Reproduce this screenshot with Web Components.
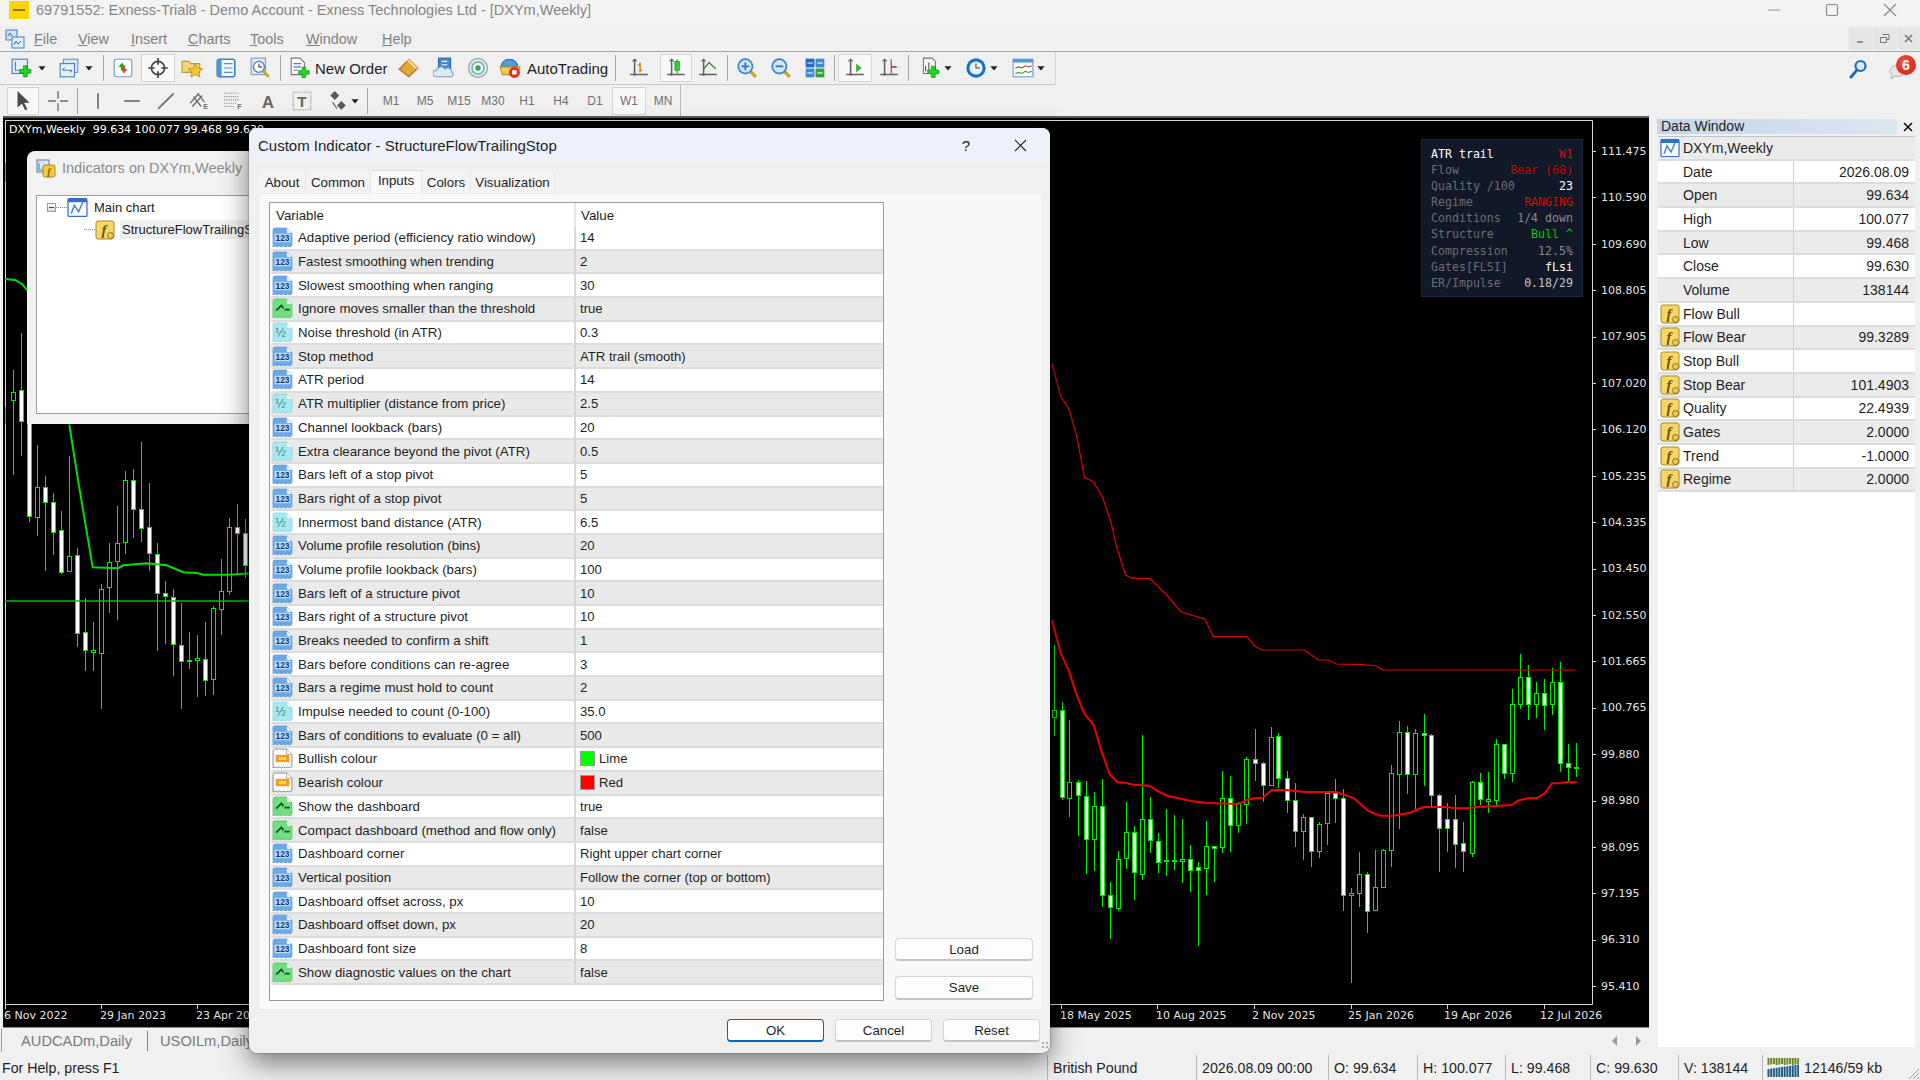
<!DOCTYPE html>
<html lang="en">
<head>
<meta charset="utf-8">
<title>Exness MT4 - Custom Indicator</title>
<style>
  html, body { margin: 0; padding: 0; }
  body {
    position: relative; width: 1920px; height: 1080px; overflow: hidden;
    display: flex; flex-direction: column; background: #f0f0f0;
    font-family: "Liberation Sans", Arial, sans-serif; font-size: 14px; color: #1f1f1f;
  }
  .main { display: flex; height: 937px; }
  .left { display: flex; flex-direction: column; width: 1651px; }
</style>
</head>
<body>
<mt-titlebar>69791552: Exness-Trial8 - Demo Account - Exness Technologies Ltd - [DXYm,Weekly]</mt-titlebar>
<mt-menubar></mt-menubar>

<mt-toolbar style="height:33px;width:1056px;border-right:1px solid #d4d4d4;border-bottom:1px solid #c8c8c8">
  <mt-tool icon="newchart" style="width:28px"></mt-tool>
  <mt-tool icon="caret" size="12" style="width:12px"></mt-tool>
  <mt-tool icon="profiles" style="width:30px;margin-left:6px"></mt-tool>
  <mt-tool icon="caret" size="12" style="width:10px"></mt-tool>
  <mt-sep style="margin-left:9px"></mt-sep>
  <mt-tool icon="market" style="margin-left:2px"></mt-tool>
  <mt-tool icon="target" pressed style="margin-left:1px"></mt-tool>
  <mt-tool icon="folderstar"></mt-tool>
  <mt-tool icon="terminal"></mt-tool>
  <mt-tool icon="tester"></mt-tool>
  <mt-sep style="margin-left:3px"></mt-sep>
  <mt-tool icon="neworder" style="width:106px;margin-left:4px;padding-left:4px;justify-content:flex-start;--gap:4px">New Order</mt-tool>
  <mt-tool icon="book" style="margin-left:1px"></mt-tool>
  <mt-tool icon="cloud" style="margin-left:1px"></mt-tool>
  <mt-tool icon="signal"></mt-tool>
  <mt-tool icon="auto" style="width:116px;margin-left:1px;padding-left:3px;justify-content:flex-start;--gap:6px">AutoTrading</mt-tool>
  <mt-sep style="margin-left:3px"></mt-sep>
  <mt-tool icon="barchart" style="width:32px;margin-left:7px"></mt-tool>
  <mt-tool icon="candle" pressed style="width:32px;margin-left:5px"></mt-tool>
  <mt-tool icon="linechart" style="width:32px"></mt-tool>
  <mt-sep style="margin-left:3px"></mt-sep>
  <mt-tool icon="zoomin" style="margin-left:2px"></mt-tool>
  <mt-tool icon="zoomout"></mt-tool>
  <mt-tool icon="tile"></mt-tool>
  <mt-sep style="margin-left:2px"></mt-sep>
  <mt-tool icon="autoscroll" pressed style="margin-left:3px"></mt-tool>
  <mt-tool icon="shift"></mt-tool>
  <mt-sep style="margin-left:2px"></mt-sep>
  <mt-tool icon="indplus" style="width:28px;margin-left:7px"></mt-tool>
  <mt-tool icon="caret" size="12" style="width:8px"></mt-tool>
  <mt-tool icon="clock" style="width:29px;margin-left:9px"></mt-tool>
  <mt-tool icon="caret" size="12" style="width:8px"></mt-tool>
  <mt-tool icon="template" style="width:29px;margin-left:10px"></mt-tool>
  <mt-tool icon="caret" size="12" style="width:8px"></mt-tool>
</mt-toolbar>

<mt-toolbar style="height:31px;width:681px;border-right:1px solid #b8b8b8">
  <mt-tool icon="arrow" pressed style="width:32px;margin-left:-1px"></mt-tool>
  <mt-tool icon="cross" style="margin-left:2px"></mt-tool>
  <mt-sep style="margin-left:2px"></mt-sep>
  <mt-tool icon="vline" style="margin-left:3px"></mt-tool>
  <mt-tool icon="hline"></mt-tool>
  <mt-tool icon="trend"></mt-tool>
  <mt-tool icon="channel"></mt-tool>
  <mt-tool icon="fib"></mt-tool>
  <mt-tool icon="lettera"></mt-tool>
  <mt-tool icon="lettert"></mt-tool>
  <mt-tool icon="arrows" style="width:28px;margin-left:4px"></mt-tool>
  <mt-tool icon="caret" size="12" style="width:8px"></mt-tool>
  <mt-sep style="margin-left:8px"></mt-sep>
  <mt-tool style="margin-left:6px">M1</mt-tool>
  <mt-tool>M5</mt-tool>
  <mt-tool>M15</mt-tool>
  <mt-tool>M30</mt-tool>
  <mt-tool>H1</mt-tool>
  <mt-tool>H4</mt-tool>
  <mt-tool>D1</mt-tool>
  <mt-tool pressed>W1</mt-tool>
  <mt-tool>MN</mt-tool>
</mt-toolbar>

<div class="main">
  <div class="left">
    <mt-chart>
      <mt-dashboard>
        <mt-dash-row label="ATR trail" value="W1" lc="#ffffff" vc="#c81414"></mt-dash-row>
        <mt-dash-row label="Flow" value="Bear (68)" vc="#c40000"></mt-dash-row>
        <mt-dash-row label="Quality /100" value="23" vc="#ffffff"></mt-dash-row>
        <mt-dash-row label="Regime" value="RANGING" vc="#e00000"></mt-dash-row>
        <mt-dash-row label="Conditions" value="1/4 down" vc="#8a8a8a"></mt-dash-row>
        <mt-dash-row label="Structure" value="Bull ^" vc="#00d000"></mt-dash-row>
        <mt-dash-row label="Compression" value="12.5%" vc="#8a8a8a"></mt-dash-row>
        <mt-dash-row label="Gates[FLSI]" value="fLsi" vc="#ffffff"></mt-dash-row>
        <mt-dash-row label="ER/Impulse" value="0.18/29" vc="#c4c4c4"></mt-dash-row>
      </mt-dashboard>
    </mt-chart>
    <mt-chart-tabs></mt-chart-tabs>
  </div>
  <mt-data-window>
    <mt-data-row icon="chartdoc" label="DXYm,Weekly" head></mt-data-row>
    <mt-data-row label="Date" value="2026.08.09"></mt-data-row>
    <mt-data-row label="Open" value="99.634"></mt-data-row>
    <mt-data-row label="High" value="100.077"></mt-data-row>
    <mt-data-row label="Low" value="99.468"></mt-data-row>
    <mt-data-row label="Close" value="99.630"></mt-data-row>
    <mt-data-row label="Volume" value="138144"></mt-data-row>
    <mt-data-row icon="func" label="Flow Bull" value=""></mt-data-row>
    <mt-data-row icon="func" label="Flow Bear" value="99.3289"></mt-data-row>
    <mt-data-row icon="func" label="Stop Bull" value=""></mt-data-row>
    <mt-data-row icon="func" label="Stop Bear" value="101.4903"></mt-data-row>
    <mt-data-row icon="func" label="Quality" value="22.4939"></mt-data-row>
    <mt-data-row icon="func" label="Gates" value="2.0000"></mt-data-row>
    <mt-data-row icon="func" label="Trend" value="-1.0000"></mt-data-row>
    <mt-data-row icon="func" label="Regime" value="2.0000"></mt-data-row>
  </mt-data-window>
</div>

<mt-statusbar></mt-statusbar>

<mt-indicators-window></mt-indicators-window>

<mt-dialog heading="Custom Indicator - StructureFlowTrailingStop">
  <mt-param type="int" value="14">Adaptive period (efficiency ratio window)</mt-param>
  <mt-param type="int" value="2">Fastest smoothing when trending</mt-param>
  <mt-param type="int" value="30">Slowest smoothing when ranging</mt-param>
  <mt-param type="bool" value="true">Ignore moves smaller than the threshold</mt-param>
  <mt-param type="dbl" value="0.3">Noise threshold (in ATR)</mt-param>
  <mt-param type="int" value="ATR trail (smooth)">Stop method</mt-param>
  <mt-param type="int" value="14">ATR period</mt-param>
  <mt-param type="dbl" value="2.5">ATR multiplier (distance from price)</mt-param>
  <mt-param type="int" value="20">Channel lookback (bars)</mt-param>
  <mt-param type="dbl" value="0.5">Extra clearance beyond the pivot (ATR)</mt-param>
  <mt-param type="int" value="5">Bars left of a stop pivot</mt-param>
  <mt-param type="int" value="5">Bars right of a stop pivot</mt-param>
  <mt-param type="dbl" value="6.5">Innermost band distance (ATR)</mt-param>
  <mt-param type="int" value="20">Volume profile resolution (bins)</mt-param>
  <mt-param type="int" value="100">Volume profile lookback (bars)</mt-param>
  <mt-param type="int" value="10">Bars left of a structure pivot</mt-param>
  <mt-param type="int" value="10">Bars right of a structure pivot</mt-param>
  <mt-param type="int" value="1">Breaks needed to confirm a shift</mt-param>
  <mt-param type="int" value="3">Bars before conditions can re-agree</mt-param>
  <mt-param type="int" value="2">Bars a regime must hold to count</mt-param>
  <mt-param type="dbl" value="35.0">Impulse needed to count (0-100)</mt-param>
  <mt-param type="int" value="500">Bars of conditions to evaluate (0 = all)</mt-param>
  <mt-param type="color" value="Lime" swatch="#00ff00">Bullish colour</mt-param>
  <mt-param type="color" value="Red" swatch="#ff0000">Bearish colour</mt-param>
  <mt-param type="bool" value="true">Show the dashboard</mt-param>
  <mt-param type="bool" value="false">Compact dashboard (method and flow only)</mt-param>
  <mt-param type="int" value="Right upper chart corner">Dashboard corner</mt-param>
  <mt-param type="int" value="Follow the corner (top or bottom)">Vertical position</mt-param>
  <mt-param type="int" value="10">Dashboard offset across, px</mt-param>
  <mt-param type="int" value="20">Dashboard offset down, px</mt-param>
  <mt-param type="int" value="8">Dashboard font size</mt-param>
  <mt-param type="bool" value="false">Show diagnostic values on the chart</mt-param>
</mt-dialog>

<script>
const plus = (x, y, s = 3) =>
  `<path d="M${x - s / 2} ${y - s * 1.5}h${s}v${s}h${s}v${s}h-${s}v${s}h-${s}v-${s}h-${s}v-${s}h${s}z" fill="#25d425" stroke="#0b8a0b" stroke-width=".6"/>`;
const axes = '<path d="M6 2v15M2 16h16" stroke="#5f5f5f" stroke-width="1.4" fill="none"/><path d="M4 4l2-2 2 2" stroke="#5f5f5f" fill="none"/>';
const paper = (fill, edge) =>
  `<path d="M1 2.5A1.5 1.5 0 0 1 2.500 1H14l5 5v11.500l-2 1.500-2-1-2 1-2-1-2 1-2-1-2 1-2-1-2 1z" fill="${fill}" stroke="${edge}" stroke-width=".8"/><path d="M14 1v5h5" fill="#fff" stroke="${edge}" stroke-width=".6"/>`;
const tile = (x, y, bg, fg) => `<rect x="${x}" y="${y}" width="8" height="8" fill="${bg}"/><path d="M${x + 1.5} ${y + 4}h5" stroke="${fg}"/>`;
const glass = (stroke, mark) =>
  `<path d="M12 12l6 6" stroke="#c9a520" stroke-width="3"/><circle cx="8.500" cy="8.500" r="6.500" fill="#cfe6fb" stroke="#3c84c8" stroke-width="1.600"/><path d="${mark}" stroke="${stroke}" stroke-width="1.600"/>`;

const ICONS = {
  caret: '<path d="M4 7h12l-6 7z" fill="#222"/>',
  newchart: `<rect x="1" y="2" width="14" height="13" fill="#e6eff9" stroke="#4c80b8"/><path d="M4 4v8h8" stroke="#4c80b8" fill="none"/>${plus(13, 13, 3.4)}`,
  profiles: '<rect x="5" y="2" width="13" height="12" fill="#d7e7f8" stroke="#6a94c0"/><rect x="2" y="6" width="13" height="12" fill="#e8f0fa" stroke="#4c80b8"/><path d="M4 12h9M4 12l2-2M13 12l-2 2" stroke="#4c80b8" fill="none"/>',
  market: '<rect x="2" y="2" width="16" height="16" rx="2" fill="#fff" stroke="#6f9cc9"/><path d="M6 9l3-4 3 4H10v3H8V9z" fill="#1da51d"/><path d="M14 11l-3 4-3-4h2V8h2v3z" fill="#d84a2a"/>',
  target: '<circle cx="10" cy="10" r="6" fill="none" stroke="#444" stroke-width="1.500"/><path d="M10 1v6M10 13v6M1 10h6M13 10h6" stroke="#444" stroke-width="1.500"/>',
  folderstar: '<path d="M1 4h6l2 2h8v8H1z" fill="#f3d77a" stroke="#bd9a3a"/><path d="M13 6l1.900 4.200 4.600.5-3.400 3 1 4.500-4.100-2.300-4 2.300.9-4.500-3.400-3 4.600-.5z" fill="#f6c93a" stroke="#b08620" stroke-width=".7"/>',
  terminal: '<rect x="2" y="2" width="16" height="16" rx="2" fill="#f4f8fd" stroke="#3f7fc0" stroke-width="1.400"/><rect x="2" y="2" width="4" height="16" fill="#4f94d8"/><path d="M8 6h8M8 10h8M8 14h8" stroke="#5f8fc0"/>',
  tester: '<rect x="2" y="1" width="13" height="15" fill="#dfe9f5" stroke="#7f9cbc"/><circle cx="9" cy="9" r="5" fill="#fff" stroke="#4c80b8" stroke-width="1.200"/><path d="M9 6v3h3" stroke="#444" fill="none"/><path d="M13 13l5 5" stroke="#c9a520" stroke-width="2.400"/>',
  neworder: `<path d="M2 1h8l4 4v11H2z" fill="#fff" stroke="#777"/><path d="M4 6h7M4 9h7M4 12h4" stroke="#4c80b8"/>${plus(13.5, 14, 3.2)}`,
  book: '<path d="M1 11l9-9 8 8-8 8z" fill="#e4a63a" stroke="#a06f18"/><path d="M10 2l8 8-2 1-8-8z" fill="#f7de97"/>',
  cloud: '<rect x="5" y="1" width="11" height="12" fill="#3f8ad6" stroke="#2868a8"/><path d="M8 4h5M8 7h5" stroke="#fff"/><path d="M3 18a3 3 0 0 1 0-6 4.500 4.500 0 0 1 8-1 3.500 3.500 0 0 1 6 2.500 2.500 2.500 0 0 1 0 4.500z" fill="#dce9f6" stroke="#7f9fc0"/>',
  signal: '<circle cx="10" cy="10" r="8.500" fill="none" stroke="#a7b3b9" stroke-width="1.600"/><circle cx="10" cy="10" r="5.500" fill="none" stroke="#6fb4c8" stroke-width="1.600"/><circle cx="10" cy="10" r="2.500" fill="#38a843"/>',
  auto: '<path d="M2 9a7.500 7 0 0 1 15 0z" fill="#4f9ae0" stroke="#2a6cae"/><path d="M1 9h18l-2 7H3z" fill="#f3cb55" stroke="#b8902a"/><circle cx="14" cy="14" r="5" fill="#e0301e"/><rect x="12" y="12" width="4" height="4" fill="#fff"/>',
  barchart: `${axes}<path d="M11 5v9M9 7h2M11 12h2" stroke="#d38a1a" stroke-width="1.400"/>`,
  candle: `${axes}<path d="M11 2v13" stroke="#1a9a1a"/><rect x="9" y="4" width="4" height="8" fill="#2fd02f" stroke="#0a8a0a" stroke-width=".6"/>`,
  linechart: `${axes}<path d="M6 11l5-6 6 6" stroke="#3e8e3e" stroke-width="1.300" fill="none"/>`,
  zoomin: glass('#3070b8', 'M5 8.500h7M8.500 5v7'),
  zoomout: glass('#3070b8', 'M5 8.500h7'),
  tile: `${tile(1.5, 1.5, '#2a66c4', '#cfe')}${tile(10.5, 1.5, '#3f8ad6', '#fff')}${tile(1.5, 10.5, '#3f8ad6', '#fff')}${tile(10.5, 10.5, '#36a33a', '#efe')}`,
  autoscroll: `${axes}<path d="M11 6l5 4-5 4z" fill="#35b535"/>`,
  shift: `${axes}<path d="M12 2v13" stroke="#5f5f5f"/><path d="M14 9l-2-2v4z" fill="#d0402a"/><path d="M13 9h4" stroke="#d0402a" stroke-width="1.600"/>`,
  indplus: `<path d="M4 1h8l3 3v11H4z" fill="#f6f6f6" stroke="#777"/><path d="M6 13V8M9 13V5" stroke="#555"/>${plus(13, 13.5, 3.4)}`,
  clock: '<circle cx="10" cy="10" r="8.800" fill="#1772c4"/><circle cx="10" cy="10" r="6" fill="#e9f2fa"/><path d="M10 6v4h3.500" stroke="#444" fill="none"/>',
  template: '<rect x="1" y="2" width="18" height="16" fill="#fff" stroke="#6f9cc9"/><rect x="1" y="2" width="18" height="3" fill="#4f94d8"/><path d="M3 10l3-1 3 1 3-2 3 1 3-1" stroke="#c0392b" fill="none"/><path d="M3 15l3-1 3 1 3-2 3 1 3-1" stroke="#3a9a3a" fill="none"/>',
  search: '<circle cx="12.500" cy="7" r="5" fill="#d7ecfc" stroke="#1e6fb8" stroke-width="2.200"/><path d="M9 11l-6 7" stroke="#1e6fb8" stroke-width="3" stroke-linecap="round"/>',
  arrow: '<path d="M5 1v15l4-3.500 3 6 2-1-3-6h5z" fill="#4a4a4a"/>',
  cross: '<path d="M10 1v7M10 12v7M1 10h7M12 10h7" stroke="#6a6a6a" stroke-width="1.200"/>',
  vline: '<path d="M10 3v14" stroke="#6a6a6a" stroke-width="1.500"/>',
  hline: '<path d="M3 10h14" stroke="#6a6a6a" stroke-width="1.500"/>',
  trend: '<path d="M3 17L17 3" stroke="#6a6a6a" stroke-width="1.500"/>',
  channel: '<path d="M1 12L9 3M3 15l9-10M4 6l7 9M8 3l6 8" stroke="#6a6a6a" stroke-width="1.200"/><text x="13" y="17.500" font-size="6.500" font-weight="700" fill="#6a6a6a" font-family="Liberation Sans">E</text>',
  fib: '<path d="M1 3h14M1 6h14M1 9h14M1 12h12M1 15h10" stroke="#8a8a8a" stroke-dasharray="1 1"/><text x="13" y="17.500" font-size="6.500" font-weight="700" fill="#6a6a6a" font-family="Liberation Sans">F</text>',
  lettera: '<text x="10" y="16" text-anchor="middle" font-size="15" font-weight="700" fill="#666" font-family="Liberation Sans">A</text>',
  lettert: '<rect x="2" y="2" width="16" height="16" fill="none" stroke="#8a8a8a" stroke-dasharray="1 1"/><text x="10" y="15.500" text-anchor="middle" font-size="14" font-weight="700" fill="#666" font-family="Liberation Sans">T</text>',
  arrows: '<path d="M8 1l4 4-4 4-4-4zM14 10l4 4-4 4-4-4z" fill="#5a5a5a"/><path d="M6 11l4 6" stroke="#5a5a5a"/>',
  app: '<rect x="1" y="1" width="11" height="10" fill="#cfe2f6" stroke="#3f7fc0"/><rect x="7" y="8" width="12" height="11" fill="#e6f0fa" stroke="#3f7fc0"/><path d="M3 7l2-3 2 3M9 16l2-4 2 3 3-3" stroke="#2a66a8" fill="none"/>',
  chartdoc: '<rect x="1" y="1.500" width="18" height="17" rx="1" fill="#fff" stroke="#2f6fd0" stroke-width="1.200"/><rect x="1" y="1.500" width="18" height="3.500" fill="#2f6fd0"/><path d="M4 16l3-8 4 6 4-9" stroke="#4a86d8" stroke-width="1.500" fill="none"/>',
  func: '<path d="M1 3a2 2 0 0 1 2-2h14a2 2 0 0 1 2 2v14l-2 2H3a2 2 0 0 1-2-2z" fill="#f7d667" stroke="#a98a2e"/><text x="9" y="15" text-anchor="middle" font-size="15" font-style="italic" font-weight="700" fill="#6b5410" font-family="Liberation Serif">f</text><circle cx="15.500" cy="15.500" r="3" fill="#f3c94c" stroke="#8a7020"/>',
  indtitle: '<rect x="1" y="2" width="12" height="12" fill="#d7e7f8" stroke="#4c80b8"/><path d="M3 5v7h7" stroke="#4c80b8" fill="none"/><rect x="7" y="7" width="12" height="12" rx="2" fill="#f4c93e" stroke="#b08620"/><text x="13" y="17" text-anchor="middle" font-size="10" font-style="italic" font-weight="700" fill="#7a5c08" font-family="Liberation Serif">f</text>',
  pint: `${paper('#69a9e8', '#6a9fd4')}<rect x="2.500" y="6.500" width="15" height="8" fill="#bcd9f6"/><text x="10" y="13.300" text-anchor="middle" font-size="8" font-weight="700" fill="#123a78" font-family="Liberation Sans">123</text>`,
  pdbl: `${paper('#a9e9ee', '#8ad4da')}<text x="8" y="14" text-anchor="middle" font-size="12" fill="#2c8a92" font-family="Liberation Sans">&#189;</text>`,
  pbool: `${paper('#74dd83', '#5cc46c')}<path d="M4 12l5-5 2 3M12 11h5" stroke="#0a5a1a" stroke-width="1.600" fill="none"/>`,
  pcolor: `${paper('#ffffff', '#777')}<rect x="3.500" y="6.500" width="13" height="7" fill="#f69a1c"/><rect x="6.500" y="8.500" width="7" height="3" fill="#ffe23a"/>`
};

class MtIcon extends HTMLElement {
  connectedCallback() {
    const size = this.getAttribute("size") || 22;
    if (!this.shadowRoot) this.attachShadow({ mode: "open" });
    this.shadowRoot.innerHTML =
      `<style>:host{display:inline-flex;flex:none}svg{display:block}</style>` +
      `<svg width="${size}" height="${size}" viewBox="0 0 20 20">${ICONS[this.getAttribute("name")] || ""}</svg>`;
  }
}

class MtTitlebar extends HTMLElement {
  constructor() {
    super();
    this.attachShadow({ mode: "open" }).innerHTML = `
      <style>
        :host { display:flex; align-items:flex-start; height:26px; background:#f3f3f3; color:#858585; font-size:14.5px; flex:none; }
        .logo { width:20px; height:18px; margin:1px 7px 0 9px; background:#ffd400; display:flex; align-items:center; justify-content:center; }
        .logo i { width:12px; height:2px; background:#8a7400; }
        .text { flex:1; line-height:20px; }
        .ctl { width:58px; height:19px; display:flex; justify-content:center; align-items:center; }
      </style>
      <div class="logo"><i></i></div>
      <div class="text"><slot></slot></div>
      <div class="ctl"><svg width="14" height="14"><path d="M1 7h12" stroke="#a0a0a0" stroke-width="1.200"/></svg></div>
      <div class="ctl"><svg width="14" height="14"><rect x="1.500" y="1.500" width="11" height="11" rx="1.500" fill="none" stroke="#8a8a8a" stroke-width="1.200"/></svg></div>
      <div class="ctl" style="margin-right:1px"><svg width="14" height="14"><path d="M1 1l12 12M13 1L1 13" stroke="#8a8a8a" stroke-width="1.200"/></svg></div>`;
  }
}

class MtMenubar extends HTMLElement {
  constructor() {
    super();
    const items = [["File", 44], ["View", 53], ["Insert", 57], ["Charts", 62], ["Tools", 56], ["Window", 76], ["Help", 50]];
    this.attachShadow({ mode: "open" }).innerHTML = `
      <style>
        :host { display:flex; align-items:center; height:26px; flex:none; box-sizing:border-box; background:#f0f0f0; border-bottom:1px solid #a8a8a8; color:#808080; font-size:14.4px; }
        .app { width:34px; display:flex; padding-left:5px; box-sizing:border-box; }
        span.m u { text-underline-offset:1px; }
        span.m { display:block; }
        .mdi { margin-left:auto; display:flex; gap:1px; }
        .mdi div { width:23px; height:23px; background:#e6e6e6; display:flex; align-items:center; justify-content:center; }
      </style>
      <div class="app"><mt-icon name="app" size="20"></mt-icon></div>
      ${items.map(([t, w]) => `<span class="m" style="width:${w}px"><u>${t[0]}</u>${t.slice(1)}</span>`).join("")}
      <div class="mdi">
        <div><svg width="10" height="10"><path d="M1 8h6" stroke="#777" stroke-width="1.500"/></svg></div>
        <div><svg width="10" height="10"><path d="M3 .5h6v5H7M.5 3.500h6v5h-6z" fill="none" stroke="#777"/></svg></div>
        <div><svg width="10" height="10"><path d="M1 1l7 7M8 1L1 8" stroke="#777" stroke-width="1.500"/></svg></div>
      </div>`;
  }
}

class MtToolbar extends HTMLElement {
  constructor() {
    super();
    this.attachShadow({ mode: "open" }).innerHTML = `
      <style>
        :host { display:flex; align-items:center; box-sizing:border-box; flex:none; background:#f0f0f0; padding-left:8px; }
      </style><slot></slot>`;
  }
}

class MtTool extends HTMLElement {
  connectedCallback() {
    if (this.shadowRoot) return;
    const icon = this.getAttribute("icon");
    const size = this.getAttribute("size") || 22;
    this.attachShadow({ mode: "open" }).innerHTML = `
      <style>
        :host { display:flex; width:34px; height:28px; flex:none; align-items:center; justify-content:center; box-sizing:border-box; font-size:15px; color:#1f1f1f; }
        :host([pressed]) { background:#f8f8f8; border:1px solid #d4d4d4; }
        :host(:not([icon])) { font-size:12px; color:#707070; }
        .label { margin-left:var(--gap, 0); white-space:nowrap; }
      </style>
      ${icon ? `<mt-icon name="${icon}" size="${size}"></mt-icon>` : ""}
      <span class="label"><slot></slot></span>`;
  }
}

class MtSep extends HTMLElement {
  constructor() {
    super();
    this.attachShadow({ mode: "open" }).innerHTML =
      `<style>:host{display:block;width:1px;height:26px;background:#a8a8a8;flex:none}</style>`;
  }
}

class MtChart extends HTMLElement {
  constructor() {
    super();
    const prices = ["111.475","110.590","109.690","108.805","107.905","107.020","106.120","105.235","104.335","103.450","102.550","101.665","100.765","99.880","98.980","98.095","97.195","96.310","95.410"];
    const times = [[4,"6 Nov 2022"],[100,"29 Jan 2023"],[196,"23 Apr 2023"],[1060,"18 May 2025"],[1156,"10 Aug 2025"],[1252,"2 Nov 2025"],[1348,"25 Jan 2026"],[1444,"19 Apr 2026"],[1540,"12 Jul 2026"]];
    this.attachShadow({ mode: "open" }).innerHTML = `
      <style>
        :host { display:block; position:relative; height:912px; flex:none; margin-left:3px; width:1646px; box-sizing:border-box; background:#000; border-top:2px solid #5a5a5a; border-bottom:1px solid #8a8a8a; color:#e4e4e4; font:11px "DejaVu Sans", sans-serif; overflow:hidden; }
        svg { position:absolute; left:0; top:0; }
        .caption { position:absolute; left:6px; top:5px; white-space:pre; color:#fff; }
        .axis { position:absolute; left:1598px; top:10.800px; display:flex; flex-direction:column; }
        .axis div { height:46.400px; line-height:46.400px; }
        .time { position:absolute; top:891px; white-space:nowrap; }
      </style>
      <svg width="1646" height="909" viewBox="3 118 1646 909"></svg>
      <div class="caption">DXYm,Weekly  99.634 100.077 99.468 99.630</div>
      <div class="axis">${prices.map(p => `<div>${p}</div>`).join("")}</div>
      ${times.map(([x, t]) => `<div class="time" style="left:${x - 3}px">${t}</div>`).join("")}
      <slot></slot>`;
    this._draw(prices.length);
  }

  _draw(nPrices) {
    // reference coordinates were read from crops at different scales
    const z8 = (x, y) => [1040 + x / 2.516, 620 + y / 3];
    const z9 = (x, y) => [1050 + x / 2.613, 120 + y / 3];
    const z10 = (x, y) => [x / 3, 400 + y / 2.45];
    const pts = a => a.map(p => p.map(n => n.toFixed(1)).join(",")).join(" ");

    const right = [[34,75,270,292,348,0],[55,247,270,530,540,1],[74,300,485,532,592,0],[95,480,485,525,647,1],[115,482,527,657,762,1],[135,516,557,657,752,0],[155,477,557,825,860,1],[176,786,825,860,956,1],[196,692,716,862,873,0],[216,547,637,716,746,0],[236,618,637,758,840,1],[256,345,596,760,780,0],[277,530,596,660,700,1],[297,640,662,725,760,1],[317,568,720,724,768,0],[338,585,720,724,750,0],[358,598,718,724,788,0],[378,675,718,750,817,1],[398,727,742,750,978,1],[418,603,677,742,825,0],[439,677,677,682,785,1],[459,453,534,682,700,0],[479,468,535,616,695,1],[499,545,550,616,640,0],[519,410,418,553,612,0],[540,328,418,430,482,1],[560,425,430,495,547,1],[580,322,350,495,498,0],[600,340,347,474,503,1],[621,453,475,540,580,1],[641,490,540,633,680,1],[661,582,592,634,720,0],[681,590,592,693,740,1],[701,605,611,693,715,0],[722,513,520,610,675,0],[742,477,520,535,610,1],[762,508,535,825,873,1],[782,803,820,825,1088,0],[803,695,762,820,860,0],[823,755,762,872,938,1],[843,690,802,870,873,0],[863,688,690,800,800,0],[883,435,460,690,740,0],[904,303,335,460,627,0],[924,318,335,460,522,1],[944,328,338,460,568,0],[965,283,338,344,498,1],[985,343,344,525,560,1],[1005,522,526,625,757,1],[1025,550,597,625,697,1],[1045,525,597,672,743,1],[1065,605,670,695,757,1],[1086,483,485,697,712,0],[1106,460,485,537,555,1],[1126,457,536,542,580,0],[1147,357,372,541,558,0],[1167,372,372,460,478,1],[1187,208,253,460,485,0],[1207,103,172,253,268,0],[1228,135,170,250,300,1],[1248,185,218,250,295,0],[1268,178,218,253,330,1],[1288,143,187,253,285,0],[1308,127,187,430,455,1],[1329,373,428,440,482,1],[1349,370,440,443,470,0]];
    const left = [[112,110,212,286,332,0],[136,185,214,250,418,1],[160,228,249,322,380,1],[184,272,318,420,425,1],[208,137,381,418,420,0],[232,362,379,571,605,1],[256,485,569,613,665,1],[280,545,612,618,665,0],[304,450,462,618,757,0],[328,350,398,460,522,0],[352,260,351,396,538,0],[376,175,197,348,378,0],[400,170,197,267,337,1],[424,103,267,313,348,1],[448,203,312,376,418,1],[472,350,377,473,614,1],[496,443,474,481,597,1],[520,463,482,598,677,1],[544,497,600,640,757,1],[568,568,638,640,660,0],[592,575,632,638,728,0],[616,545,634,685,725,1],[640,505,510,685,722,0],[664,390,467,510,576,0],[688,290,310,467,477,0],[712,255,310,325,425,1],[736,292,326,404,435,1]];

    const candle = (cx, hi, top, bot, lo, white) => {
      const x = Math.round(cx) + 0.5;
      const y = Math.round(top) + 0.5;
      const h = Math.max(1, Math.round(bot - top));
      return `<path d="M${x} ${hi.toFixed(1)}V${lo.toFixed(1)}" stroke="#00ee00"/>` +
        `<rect x="${x - 2}" y="${y}" width="4" height="${h}" fill="${white ? "#fff" : "#000"}" stroke="#00ee00"/>`;
    };
    let out = `<path d="M5.500 1004.500V120.500H1592.500V1004.500H5.500z" fill="none" stroke="#d8d8d8"/>`;
    for (let i = 0; i < nPrices; i++) {
      const y = Math.round(151 + i * 46.4) + 0.5;
      out += `<path d="M1592 ${y}h4" stroke="#d8d8d8"/>`;
    }
    [5, 101, 197, 1061, 1157, 1254, 1351, 1447, 1544].forEach(x => {
      out += `<path d="M${x + 0.5} 1004v5" stroke="#d8d8d8"/>`;
    });

    let candles = "";
    right.forEach(c => {
      const [x, hi] = z8(c[0], c[1]);
      candles += candle(x, hi, z8(0, c[2])[1], z8(0, c[3])[1], z8(0, c[4])[1], c[5]);
    });
    left.forEach(c => {
      const [x, hi] = z10(c[0], c[1]);
      candles += candle(x, hi, z10(0, c[2])[1], z10(0, c[3])[1], z10(0, c[4])[1], c[5]);
    });
    candles += candle(13, 370, 392, 400, 475, 0) + candle(21, 333, 390, 421, 456, 1) + candle(29, 340, 350, 516, 522, 1);
    candles += `<path d="M5.500 407V424M5.500 163V182" stroke="#00ee00"/>`;
    out += `<g shape-rendering="crispEdges">${candles}</g>`;

    // flow line, support line and the two stop lines
    const flowLeft = [[208,60],[235,200],[278,410],[355,412],[370,405],[440,400],[500,405],[550,422],[590,424],[610,428],[680,428],[745,425]].map(p => z10(p[0], p[1]));
    out += `<path d="M5 601H252" stroke="#00c000" stroke-width="1.500"/>`;
    out += `<polyline points="5,279 15,280 22,284 28,291" fill="none" stroke="#00e000" stroke-width="2"/>`;
    out += `<polyline points="${pts(flowLeft)}" fill="none" stroke="#00e000" stroke-width="2"/>`;

    const stopA = [[5,730],[28,830],[50,868],[70,950],[90,1072],[113,1085],[137,1130],[160,1210],[175,1285],[197,1365],[215,1375],[260,1375],[305,1425],[342,1476],[405,1498],[427,1550]].map(p => z9(p[0], p[1]));
    const stopB = [[520,50],[540,78],[558,90],[665,90],[700,120],[725,120],[745,132],[815,134],[845,138],[862,150],[1347,150]].map(p => z8(p[0], p[1]));
    out += `<polyline points="${pts(stopA.concat(stopB))}" fill="none" stroke="#e00000" stroke-width="1.200"/>`;

    const flowRight = [[30,0],[52,100],[72,150],[92,225],[112,282],[135,315],[155,395],[175,463],[195,487],[215,488],[235,494],[275,497],[297,514],[320,527],[380,543],[420,549],[500,552],[520,540],[540,535],[560,533],[583,510],[620,510],[665,516],[745,516],[790,535],[825,572],[855,587],[890,587],[930,578],[965,561],[1025,561],[1045,565],[1085,565],[1095,561],[1150,558],[1187,555],[1205,541],[1230,534],[1250,534],[1270,520],[1288,490],[1305,490],[1320,487],[1350,487]].map(p => z8(p[0], p[1]));
    out += `<polyline points="${pts(flowRight)}" fill="none" stroke="#f00000" stroke-width="2"/>`;
    this.shadowRoot.querySelector("svg").innerHTML = out;
  }
}

class MtDashboard extends HTMLElement {
  constructor() {
    super();
    this.attachShadow({ mode: "open" }).innerHTML = `
      <style>
        :host { position:absolute; left:1418px; top:21px; width:162px; height:158px; box-sizing:border-box; padding:6px 9px 0; background:#111827; border:1px solid #1c2840; font:11.6px "DejaVu Sans Mono", "Liberation Mono", monospace; color:#6e6e6e; }
      </style><slot></slot>`;
  }
}

class MtDashRow extends HTMLElement {
  constructor() {
    super();
    this.attachShadow({ mode: "open" }).innerHTML = `
      <style>
        :host { display:flex; justify-content:space-between; height:16.100px; line-height:16px; white-space:pre; }
      </style><span id="l"></span><span id="v"></span>`;
  }
  connectedCallback() {
    const l = this.shadowRoot.getElementById("l");
    const v = this.shadowRoot.getElementById("v");
    l.textContent = this.getAttribute("label");
    v.textContent = this.getAttribute("value");
    if (this.getAttribute("lc")) l.style.color = this.getAttribute("lc");
    if (this.getAttribute("vc")) v.style.color = this.getAttribute("vc");
  }
}

class MtChartTabs extends HTMLElement {
  constructor() {
    super();
    this.attachShadow({ mode: "open" }).innerHTML = `
      <style>
        :host { display:flex; align-items:center; height:24px; flex:none; background:#f0f0f0; color:#7a7a7a; font-size:14.7px; box-sizing:border-box; border-left:1px solid #a0a0a0; margin-left:1px; padding-top:1px; }
        .tab { margin-left:19px; }
        .bar { width:1px; height:20px; background:#808080; margin:0 12px 0 15px; }
        .nav { margin-left:auto; display:flex; gap:17px; padding-right:10px; }
      </style>
      <span class="tab">AUDCADm,Daily</span><span class="bar"></span><span>USOILm,Daily</span>
      <div class="nav">
        <svg width="6" height="10"><path d="M5 0v10L0 5z" fill="#9a9a9a"/></svg>
        <svg width="6" height="10"><path d="M1 0v10l5-5z" fill="#9a9a9a"/></svg>
      </div>`;
  }
}

class MtDataWindow extends HTMLElement {
  constructor() {
    super();
    this.attachShadow({ mode: "open" }).innerHTML = `
      <style>
        :host { display:flex; flex-direction:column; width:269px; flex:none; box-sizing:border-box; padding:3px 5px 6px 6px; background:#f0f0f0; position:relative; }
        .head { display:flex; height:15px; align-items:center; flex:none; }
        .title { width:240px; height:15px; line-height:15px; padding-left:4px; box-sizing:border-box; font-size:14px; color:#1f1f1f; background:linear-gradient(90deg,#c4d6e8,#dbe6f1); }
        .x { margin-left:auto; margin-right:2px; display:flex; }
        .body { flex:1; margin:2px 0 0 1px; background:#fff; border-top:1px solid #c4c4c4; }
        .search { position:absolute; left:197px; top:-57px; }
        .chat { position:absolute; left:236px; top:-61px; width:30px; height:28px; }
        .chat b { position:absolute; left:9px; top:0; width:20px; height:20px; border-radius:50%; background:radial-gradient(circle at 40% 35%,#f0503a,#c81e10); color:#fff; font:700 14px/20px "Liberation Sans",sans-serif; text-align:center; }
      </style>
      <mt-icon class="search" name="search" size="20"></mt-icon>
      <div class="chat"><svg width="22" height="26" style="position:absolute;left:0;top:8px"><path d="M3 8a8 6 0 0 1 16 0 8 6 0 0 1-11 5l-4 3 1-4a6 6 0 0 1-2-4z" fill="#e4e4e4" stroke="#b4b4b4"/></svg><b>6</b></div>
      <div class="head"><div class="title">Data Window</div><div class="x"><svg width="10" height="10"><path d="M1 1l8 8M9 1L1 9" stroke="#111" stroke-width="1.600"/></svg></div></div>
      <div class="body"><slot></slot></div>`;
  }
}

class MtDataRow extends HTMLElement {
  connectedCallback() {
    if (this.shadowRoot) return;
    const icon = this.getAttribute("icon");
    this.attachShadow({ mode: "open" }).innerHTML = `
      <style>
        :host { display:flex; height:23.700px; box-sizing:border-box; align-items:center; border-bottom:2px solid #dcdcdc; background:#fff; font-size:14px; color:#1f1f1f; }
        :host(:nth-child(odd)) { background:#ebebeb; }
        .l { display:flex; align-items:center; width:136px; height:100%; box-sizing:border-box; border-right:1px solid #cfcfcf; padding-left:2px; }
        .ic { width:21px; display:flex; margin-right:2px; flex:none; }
        .v { flex:1; text-align:right; padding-right:6px; }
        :host([head]) .l { border-right:0; width:auto; }
      </style>
      <div class="l"><span class="ic">${icon ? `<mt-icon name="${icon}" size="20"></mt-icon>` : ""}</span>${this.getAttribute("label")}</div>
      <div class="v">${this.getAttribute("value") || ""}</div>`;
  }
}

class MtStatusbar extends HTMLElement {
  constructor() {
    super();
    const segs = [[1047,"For Help, press F1"],[149,"British Pound"],[132,"2026.08.09 00:00"],[89,"O: 99.634"],[88,"H: 100.077"],[85,"L: 99.468"],[88,"C: 99.630"],[84,"V: 138144"]];
    let bars = "";
    for (let i = 0; i < 12; i++) {
      const x = i * 2.7 + 0.5;
      const h = 6 + (i % 3);
      bars += `<rect x="${x}" y="0" width="2" height="${10 - h / 2}" fill="#6f8a22"/>`;
      bars += `<rect x="${x}" y="${11 - i * 0.4}" width="2" height="${8 + i * 0.4}" fill="#1f5f86"/>`;
    }
    this.attachShadow({ mode: "open" }).innerHTML = `
      <style>
        :host { display:flex; height:27px; flex:none; background:#f0f0f0; font-size:14.2px; color:#1f1f1f; }
        .s { display:flex; align-items:center; box-sizing:border-box; padding-left:5px; border-left:1px solid #b8b8b8; margin-top:2px; flex:none; white-space:nowrap; }
        .s:first-of-type { border-left:0; padding-left:2px; }
        .net { flex:1; gap:5px; padding-left:4px; }
        .grip { margin-left:auto; align-self:flex-end; }
      </style>
      ${segs.map(([w, t]) => `<div class="s" style="width:${w}px">${t}</div>`).join("")}
      <div class="s net"><svg width="32" height="19">${bars}</svg><span>12146/59 kb</span>
        <svg class="grip" width="14" height="14"><path d="M13 3L3 13M13 7l-6 6M13 11l-2 2" stroke="#9a9a9a"/></svg></div>`;
  }
}

class MtIndicatorsWindow extends HTMLElement {
  constructor() {
    super();
    this.attachShadow({ mode: "open" }).innerHTML = `
      <style>
        :host { position:absolute; left:27px; top:151px; width:300px; height:273px; box-sizing:border-box; display:flex; flex-direction:column; background:#f2f2f2; border-radius:8px 8px 0 0; padding:0 0 10px 9px; font-size:14px; }
        .t { display:flex; align-items:center; height:34px; flex:none; color:#8c8c8c; font-size:14.5px; gap:6px; margin-bottom:10px; }
        .tree { flex:1; background:#fff; border:1px solid #9aa0a8; font-size:13px; color:#222; padding:1px 0 0 10px; }
        .row { display:flex; align-items:center; height:21px; }
        .row + .row { margin-top:1px; }
        .exp { width:9px; height:9px; box-sizing:border-box; border:1px solid #9a9a9a; background:linear-gradient(#fff,#ddd); display:flex; align-items:center; justify-content:center; }
        .exp i { width:5px; height:1px; background:#444; }
        .dots { width:11px; height:0; border-top:1px dotted #888; }
        .sel { background:#f0f0f0; padding:2px 2px; margin-left:5px; white-space:nowrap; }
      </style>
      <div class="t"><mt-icon name="indtitle" size="20"></mt-icon><span>Indicators on DXYm,Weekly</span></div>
      <div class="tree">
        <div class="row"><span class="exp"><i></i></span><span class="dots"></span><mt-icon name="chartdoc" size="21"></mt-icon><span style="margin-left:6px">Main chart</span></div>
        <div class="row" style="margin-left:37px"><span class="dots"></span><mt-icon name="func" size="20"></mt-icon><span class="sel">StructureFlowTrailingStop</span></div>
      </div>`;
  }
}

class MtDialog extends HTMLElement {
  connectedCallback() {
    if (this.shadowRoot) return;
    this.attachShadow({ mode: "open" }).innerHTML = `
      <style>
        :host { position:absolute; left:249px; top:128px; width:801px; height:925px; box-sizing:border-box; display:flex; flex-direction:column; background:#f0f0f0; border-radius:8px; box-shadow:0 10px 28px rgba(0,0,0,.5), 0 0 2px rgba(0,0,0,.5); font-size:13.3px; color:#1f1f1f; }
        .bar { display:flex; align-items:center; height:35px; flex:none; padding-left:9px; font-size:15px; background:#eef2f8; border-radius:8px 8px 0 0; }
        .bar .h { flex:1; }
        .q { width:20px; text-align:center; margin-right:38px; }
        .x { display:flex; margin-right:23px; }
        .tabs { display:flex; height:30px; flex:none; align-items:flex-end; padding-left:10px; }
        .tab { display:flex; align-items:center; justify-content:center; height:21px; box-sizing:border-box; background:#f3f3f3; border-right:1px solid #e6e6e6; }
        .tab.on { height:23px; padding-bottom:4px; background:#f8f8f8; border-top:1px solid #d8d8d8; }
        .panel { display:flex; flex:none; height:817px; margin:0 7px 0 9px; box-sizing:border-box; padding:8px 9px 8px 10px; background:#f8f8f8; border:1px solid #ececec; gap:11px; }
        .table { display:flex; flex-direction:column; width:615px; flex:none; box-sizing:border-box; background:#fff; border:1.500px solid #9a9aa6; }
        .hdr { display:flex; height:24px; flex:none; box-sizing:border-box; align-items:center; }
        .hdr div:first-child { width:306px; padding-left:6px; box-sizing:border-box; border-right:2px solid #e6e6e6; height:100%; display:flex; align-items:center; }
        .hdr div:last-child { padding-left:5px; }
        .side { display:flex; flex-direction:column; flex:1; justify-content:flex-end; gap:15px; padding-bottom:1px; }
        .foot { display:flex; justify-content:flex-end; gap:11px; padding:9px 10px 0 0; }
        .grip { position:absolute; right:1px; bottom:2px; }
      </style>
      <div class="bar"><div class="h">${this.getAttribute("heading")}</div><div class="q">?</div>
        <div class="x"><svg width="13" height="13"><path d="M1 1l11 11M12 1L1 12" stroke="#222" stroke-width="1.100"/></svg></div></div>
      <div class="tabs">
        <div class="tab" style="width:47px">About</div><div class="tab" style="width:65px">Common</div><div class="tab on" style="width:51px">Inputs</div><div class="tab" style="width:49px">Colors</div><div class="tab" style="width:84px">Visualization</div>
      </div>
      <div class="panel">
        <div class="table">
          <div class="hdr"><div>Variable</div><div>Value</div></div>
          <mt-param-list><slot></slot></mt-param-list>
        </div>
        <div class="side"><mt-button style="height:23px">Load</mt-button><mt-button style="height:24px">Save</mt-button></div>
      </div>
      <div class="foot"><mt-button primary style="width:97px">OK</mt-button><mt-button style="width:97px">Cancel</mt-button><mt-button style="width:97px">Reset</mt-button></div>
      <svg class="grip" width="8" height="10"><path d="M1 1h2v2H1zM5 1h2v2H5zM1 5h2v2H1zM5 5h2v2H5z" fill="#b0b0b0"/></svg>`;
  }
}

class MtParamList extends HTMLElement {
  constructor() {
    super();
    this.attachShadow({ mode: "open" }).innerHTML =
      `<style>:host{display:block;flex:1;padding-left:1px}</style><slot></slot>`;
  }
}

class MtParam extends HTMLElement {
  connectedCallback() {
    if (this.shadowRoot) return;
    const type = this.getAttribute("type");
    const icons = { int: "pint", dbl: "pdbl", bool: "pbool", color: "pcolor" };
    const sw = this.getAttribute("swatch");
    this.attachShadow({ mode: "open" }).innerHTML = `
      <style>
        :host { display:flex; height:23.700px; box-sizing:border-box; border-bottom:2px solid #dcdcdc; background:#fff; align-items:center; font-size:13.3px; color:#1f1f1f; white-space:nowrap; }
        :host(:nth-child(even)) { background:#e9e9e9; }
        .name { display:flex; align-items:center; width:305px; height:100%; flex:none; box-sizing:border-box; padding-left:1px; border-right:2px solid #d8d8d8; }
        .name mt-icon { margin-right:5px; }
        .val { display:flex; align-items:center; padding-left:4px; font-size:13.15px; }
        .sw { width:15px; height:15px; box-sizing:border-box; border:1px solid #9a9a9a; margin-right:4px; }
      </style>
      <div class="name"><mt-icon name="${icons[type]}" size="21"></mt-icon><slot></slot></div>
      <div class="val">${sw ? `<span class="sw" style="background:${sw}"></span>` : ""}${this.getAttribute("value")}</div>`;
  }
}

class MtButton extends HTMLElement {
  constructor() {
    super();
    this.attachShadow({ mode: "open" }).innerHTML = `
      <style>
        :host { display:flex; height:23px; box-sizing:border-box; align-items:center; justify-content:center; background:#fdfdfd; border:1px solid #d4d4d4; border-bottom:2px solid #c4c4c4; border-radius:4px; font-size:13.3px; color:#1f1f1f; }
        :host([primary]) { border:1.500px solid #0067c0; border-bottom:2px solid #0067c0; background:#fff; }
      </style><slot></slot>`;
  }
}

customElements.define("mt-icon", MtIcon);
customElements.define("mt-titlebar", MtTitlebar);
customElements.define("mt-menubar", MtMenubar);
customElements.define("mt-toolbar", MtToolbar);
customElements.define("mt-tool", MtTool);
customElements.define("mt-sep", MtSep);
customElements.define("mt-chart", MtChart);
customElements.define("mt-dashboard", MtDashboard);
customElements.define("mt-dash-row", MtDashRow);
customElements.define("mt-chart-tabs", MtChartTabs);
customElements.define("mt-data-window", MtDataWindow);
customElements.define("mt-data-row", MtDataRow);
customElements.define("mt-statusbar", MtStatusbar);
customElements.define("mt-indicators-window", MtIndicatorsWindow);
customElements.define("mt-dialog", MtDialog);
customElements.define("mt-param-list", MtParamList);
customElements.define("mt-param", MtParam);
customElements.define("mt-button", MtButton);
</script>
</body>
</html>
